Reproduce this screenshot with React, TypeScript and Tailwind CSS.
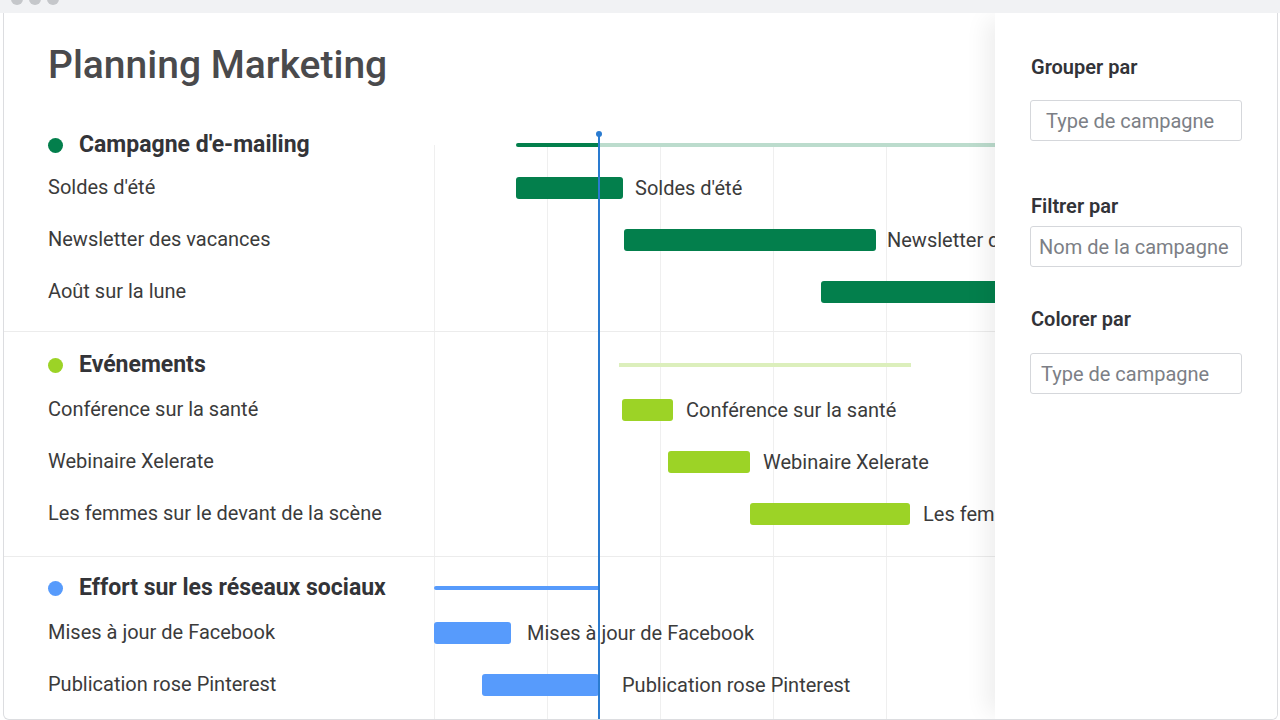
import React from 'react';

type Item = { label: string; start: number; end: number; gap: number };
type Group = {
  name: string;
  color: string;
  light: string;
  summary: { start: number; end: number };
  items: Item[];
  pad: string;
};

// page x of the timeline origin and of the "today" marker
const ORIGIN = 434;
const TODAY = 599;

const groups: Group[] = [
  {
    name: "Campagne d'e-mailing",
    color: '#037f4c',
    light: '#bcdccd',
    summary: { start: 516, end: 1010 },
    pad: 'pt-0 pb-[13px]',
    items: [
      { label: "Soldes d'été", start: 516, end: 623, gap: 12 },
      { label: 'Newsletter des vacances', start: 624, end: 876, gap: 11 },
      { label: 'Août sur la lune', start: 821, end: 1010, gap: 12 },
    ],
  },
  {
    name: 'Evénements',
    color: '#9cd326',
    light: '#dcefbc',
    summary: { start: 619, end: 911 },
    pad: 'pt-[14px] pb-[16px]',
    items: [
      { label: 'Conférence sur la santé', start: 622, end: 673, gap: 13 },
      { label: 'Webinaire Xelerate', start: 668, end: 750, gap: 13 },
      { label: 'Les femmes sur le devant de la scène', start: 750, end: 910, gap: 13 },
    ],
  },
  {
    name: 'Effort sur les réseaux sociaux',
    color: '#579bfc',
    light: '#c6dcfc',
    summary: { start: 434, end: 599 },
    pad: 'pt-[12px] pb-[20px]',
    items: [
      { label: 'Mises à jour de Facebook', start: 434, end: 511, gap: 16 },
      { label: 'Publication rose Pinterest', start: 482, end: 599, gap: 23 },
    ],
  },
];

const gridLines = [0, 1, 2, 3, 4, 5];

const SummaryLine: React.FC<{ group: Group }> = ({ group }) => {
  const { start, end } = group.summary;
  const split = Math.min(Math.max(TODAY, start), end);
  return (
    <>
      {split > start && (
        <div
          className="absolute top-1/2 -translate-y-1/2 h-[4px] rounded-l-[2px]"
          style={{ left: start - ORIGIN, width: split - start, backgroundColor: group.color }}
        />
      )}
      {end > split && (
        <div
          className="absolute top-1/2 -translate-y-1/2 h-[4px]"
          style={{ left: split - ORIGIN, width: end - split, backgroundColor: group.light }}
        />
      )}
    </>
  );
};

const GroupSection: React.FC<{ group: Group }> = ({ group }) => (
  <div className={`border-b border-[#ececec] ${group.pad}`}>
    {/* Group header */}
    <div className={`flex ${group.pad.startsWith('pt-0') ? 'h-[34px]' : 'h-[38px]'}`}>
      <div className="w-[430px] shrink-0 pl-[44px] flex items-center gap-[16px] whitespace-nowrap">
        <span className="w-[15px] h-[15px] shrink-0 rounded-full" style={{ backgroundColor: group.color }} />
        <span className="text-[23px] font-bold text-[#333438]">{group.name}</span>
      </div>
      <div className="relative flex-1">
        <SummaryLine group={group} />
      </div>
    </div>

    {/* Rows */}
    {group.items.map((item) => (
      <div key={item.label} className="flex h-[52px]">
        <div className="w-[430px] shrink-0 pl-[44px] flex items-center pb-[3px] text-[20px] text-[#3b3b3b] whitespace-nowrap">
          {item.label}
        </div>
        <div className="relative flex-1">
          <div
            className="absolute top-1/2 -translate-y-1/2 h-[22px] rounded-[3px]"
            style={{ left: item.start - ORIGIN, width: item.end - item.start, backgroundColor: group.color }}
          />
          <span
            className="absolute top-1/2 -translate-y-1/2 text-[20px] text-[#3b3b3b] whitespace-nowrap"
            style={{ left: item.end - ORIGIN + item.gap }}
          >
            {item.label}
          </span>
        </div>
      </div>
    ))}
  </div>
);

const Field: React.FC<{ label: string; value: string; labelCls: string; boxCls: string }> = ({
  label,
  value,
  labelCls,
  boxCls,
}) => (
  <>
    <div className={`text-[20px] leading-[24px] font-semibold text-[#323338] ${labelCls}`}>{label}</div>
    <div
      className={`w-[212px] h-[41px] border border-[#d5d7db] rounded-[3px] flex items-center text-[20px] text-[#7c7f86] whitespace-nowrap overflow-hidden ${boxCls}`}
    >
      {value}
    </div>
  </>
);

export default function App() {
  return (
    <div
      className="w-[1280px] h-[720px] bg-white overflow-hidden flex flex-col"
      style={{ fontFamily: 'Roboto, "Liberation Sans", sans-serif' }}
    >
      {/* Window title bar */}
      <div className="h-[13px] shrink-0 bg-[#f1f2f4] flex items-start gap-[6px] pl-[11px]">
        <span className="w-[12px] h-[12px] -mt-[7px] rounded-full bg-[#c5c7ca]" />
        <span className="w-[12px] h-[12px] -mt-[7px] rounded-full bg-[#c5c7ca]" />
        <span className="w-[12px] h-[12px] -mt-[7px] rounded-full bg-[#c5c7ca]" />
      </div>

      <div className="flex-1 min-h-0 ml-[3px] w-[1275px] border-x border-b border-[#dcdde0] rounded-b-[6px] flex overflow-hidden">
        {/* Main gantt area */}
        <main className="w-[991px] shrink-0 overflow-hidden">
          <h1 className="pt-[28px] pl-[44px] text-[39px] leading-[48px] font-medium text-[#4a4a4c] mb-[39px] whitespace-nowrap">
            Planning Marketing
          </h1>

          <div className="relative">
            {/* grid */}
            {gridLines.map((i) => (
              <div
                key={i}
                className="absolute top-[17px] bottom-0 w-px bg-[#efefef]"
                style={{ left: ORIGIN - 4 + i * 113 }}
              />
            ))}

            <div className="relative">
              {groups.map((g) => (
                <GroupSection key={g.name} group={g} />
              ))}
            </div>

            {/* today marker */}
            <div className="absolute top-[6px] bottom-0 w-[2px] bg-[#2a7bd0]" style={{ left: TODAY - 5 }} />
            <div className="absolute top-[3px] w-[6px] h-[6px] rounded-full bg-[#2a7bd0]" style={{ left: TODAY - 7 }} />
          </div>
        </main>

        {/* Settings panel */}
        <aside className="relative z-10 w-[282px] shrink-0 bg-white pl-[35px] pt-[42px] shadow-[-14px_0_22px_-6px_rgba(0,0,0,0.07)]">
          <Field label="Grouper par" value="Type de campagne" labelCls="pl-px mb-[21px]" boxCls="pl-[15px]" />
          <Field label="Filtrer par" value="Nom de la campagne" labelCls="pl-px mt-[53px] mb-[8px]" boxCls="pl-[8px]" />
          <Field label="Colorer par" value="Type de campagne" labelCls="pl-px mt-[40px] mb-[22px]" boxCls="pl-[10px]" />
        </aside>
      </div>
    </div>
  );
}
